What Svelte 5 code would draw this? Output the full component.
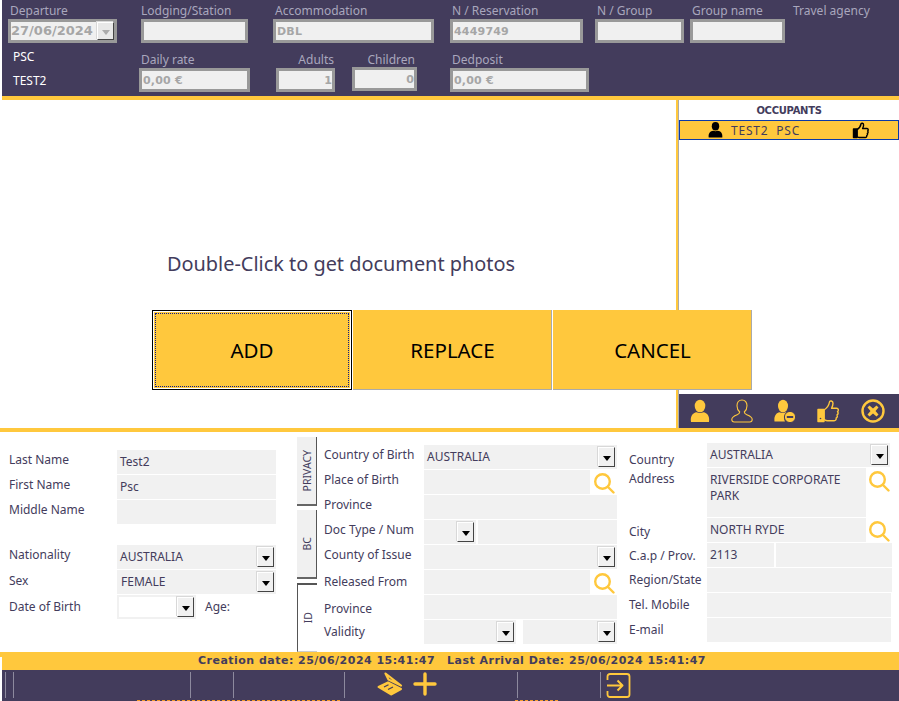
<script lang="ts">
	const occupant = { first: 'TEST2', last: 'PSC' };
</script>

{#snippet arrow(cls = '')}
	<span class="arrow {cls}"><i></i></span>
{/snippet}

{#snippet lens()}
	<svg class="lens" width="22" height="22" viewBox="0 0 22 22" fill="none" stroke="#ffc83d" stroke-width="2.4" stroke-linecap="round">
		<circle cx="9.5" cy="9.5" r="7.3" />
		<path d="M15 15l5.5 5.5" />
	</svg>
{/snippet}

{#snippet thumb(size = 18, fill = 'none', stroke = '#000')}
	<svg width={size} height={size} viewBox="0 0 18 18" {fill} {stroke} stroke-width="1.4" stroke-linejoin="round">
		<path d="M1.5 8h3.5v8.5H1.5z" fill={stroke} />
		<path d="M5 8.5c2 -1 3.500 -3 4 -5.500 .2 -1.300 2.600 -1 2.600 1 0 1.200 -.4 2.300 -1 3.500h4.400c1.500 0 1.600 2 .6 2.500 .8 .7 .6 2 -.3 2.400 .5 .8 .2 1.900 -.6 2.200 .2 1 -.3 1.900 -1.400 1.900H7.500c-1 0 -1.700 -.4 -2.500 -.8z" />
	</svg>
{/snippet}

<div class="page">
	<header class="top">
		<div class="row first">
			<div class="field dep">
				<span class="lab">Departure</span>
				<div class="datebox">27/06/2024<span class="arrow off"><i></i></span></div>
			</div>
			<div class="field lodging"><span class="lab flush">Lodging/Station</span><div class="ro"></div></div>
			<div class="field accom"><span class="lab">Accommodation</span><div class="ro">DBL</div></div>
			<div class="field resv"><span class="lab">N / Reservation</span><div class="ro">4449749</div></div>
			<div class="field group"><span class="lab">N / Group</span><div class="ro"></div></div>
			<div class="field gname"><span class="lab">Group name</span><div class="ro"></div></div>
			<div class="field agency"><span class="lab flush">Travel agency</span></div>
		</div>
		<div class="row second">
			<div class="guest"><span>PSC</span><span>TEST2</span></div>
			<div class="field rate"><span class="lab">Daily rate</span><div class="ro">0,00 €</div></div>
			<div class="field adults"><span class="lab right">Adults</span><div class="ro right">1</div></div>
			<div class="field children"><span class="lab right">Children</span><div class="ro right">0</div></div>
			<div class="field deposit"><span class="lab">Dedposit</span><div class="ro">0,00 €</div></div>
		</div>
	</header>

	<main class="middle">
		<div class="photos">
			<p class="hint">Double-Click to get document photos</p>
		</div>
		<aside class="occupants">
			<h3>OCCUPANTS</h3>
			<div class="occupant">
				<svg width="15" height="16" viewBox="0 0 15 16" fill="#000">
					<ellipse cx="7.500" cy="4.300" rx="3.700" ry="4.200" />
					<path d="M.7 15.500c-.5 -4.500 1.800 -6.500 4.500 -6.700 1.400 .6 3.200 .6 4.600 0 2.700 .2 5 2.200 4.500 6.700z" />
				</svg>
				<span class="who">{occupant.first}&nbsp; {occupant.last}</span>
				{@render thumb(18)}
			</div>
			<div class="tools">
				<svg width="20" height="24" viewBox="0 0 20 24" fill="#ffc83d">
					<ellipse cx="10" cy="7" rx="5.300" ry="6.300" />
					<path d="M1 23c-1 -6 2 -9 5.500 -9.700 2 1 5 1 7 0 3.500 .7 6.500 3.700 5.500 9.700z" />
				</svg>
				<svg width="22" height="24" viewBox="0 0 22 24" fill="none" stroke="#ffc83d" stroke-width="1.100">
					<path d="M11 1c3.200 0 5 2.600 5 5.700 0 2.600 -1.200 5 -2.700 6.300 0 1.500 .7 2 2.500 2.700 3 1.100 5.400 2.200 5.400 4.800 0 1.700 -1 2.500 -2.500 2.500H3.300C1.800 23 .8 22.200 .8 20.500c0 -2.600 2.400 -3.700 5.400 -4.800 1.800 -.7 2.500 -1.200 2.500 -2.700C7.200 11.700 6 9.300 6 6.700 6 3.600 7.800 1 11 1z" />
				</svg>
				<svg width="22" height="24" viewBox="0 0 22 24" fill="#ffc83d">
					<ellipse cx="9" cy="7" rx="5" ry="6.300" />
					<path d="M.5 22.500c-.7 -6 2 -8.700 5 -9.300 1.800 .8 4.500 .8 6.300 0 1 .2 2 .7 2.800 1.300a5.500 5.500 0 0 0 -3.600 8z" />
					<circle cx="16" cy="18" r="5.600" stroke="#433c5c" stroke-width="1" />
					<rect x="12.800" y="17" width="6.400" height="2" fill="#433c5c" />
				</svg>
				<svg width="23" height="24" viewBox="0 0 23 24" fill="none" stroke="#ffc83d" stroke-width="1.400" stroke-linejoin="round">
					<path d="M1 10.500h6v12H1z" fill="#ffc83d" />
					<path d="M7 11c2.500 -1.500 4.800 -4 5.500 -8 .3 -1.700 3.500 -1.400 3.500 1.300 0 1.800 -.6 3.300 -1.400 5h5c2 0 2.300 2.700 .9 3.400 1 .9 .8 2.700 -.5 3.300 .7 1.200 .3 2.600 -.8 3 .2 1.400 -.5 2.700 -2 2.700H10.500c-1.400 0 -2.400 -.6 -3.500 -1.200z" />
					<circle cx="3.500" cy="19.500" r=".8" fill="#433c5c" stroke="none" />
				</svg>
				<svg width="24" height="24" viewBox="0 0 24 24">
					<circle cx="12" cy="12" r="10.500" fill="none" stroke="#ffc83d" stroke-width="2.400" />
					<path d="M8.500 6.500L12 9.500l3.500 -3 2 2L14.500 12l3 3.500 -2 2 -3.500 -3 -3.500 3 -2 -2 3 -3.500 -3 -3.500z" fill="#ffc83d" />
				</svg>
			</div>
		</aside>
		<div class="choices">
			<button class="focused"><span>ADD</span></button>
			<button>REPLACE</button>
			<button>CANCEL</button>
		</div>
	</main>

	<section class="form">
		<div class="col names">
			<span class="l">Last Name</span><div class="v">Test2</div>
			<span class="l">First Name</span><div class="v">Psc</div>
			<span class="l">Middle Name</span><div class="v"></div>
			<span class="spacer"></span>
			<span class="l">Nationality</span><div class="v">AUSTRALIA{@render arrow()}</div>
			<span class="l down1">Sex</span><div class="v ind">FEMALE{@render arrow()}</div>
			<span class="l down2">Date of Birth</span>
			<div class="dob">
				<div class="v short"><span class="blank">{@render arrow()}</span></div>
				<span class="l age">Age:</span>
			</div>
		</div>

		<div class="tabs">
			<button><span>PRIVACY</span></button>
			<button><span>BC</span></button>
			<button class="active"><span>ID</span></button>
		</div>

		<div class="col doc">
			<span class="l">Country of Birth</span><div class="v">AUSTRALIA{@render arrow()}</div>
			<span class="l">Place of Birth</span><div class="pair"><div class="v grow"></div>{@render lens()}</div>
			<span class="l">Province</span><div class="v"></div>
			<span class="l">Doc Type / Num</span><div class="pair tight"><div class="v type">{@render arrow()}</div><div class="v grow"></div></div>
			<span class="l">County of Issue</span><div class="v">{@render arrow()}</div>
			<span class="l down2">Released From</span><div class="pair"><div class="v grow"></div>{@render lens()}</div>
			<span class="l down4">Province</span><div class="v"></div>
			<span class="l down2">Validity</span><div class="pair wide"><div class="v valid">{@render arrow()}</div><div class="v grow">{@render arrow()}</div></div>
		</div>

		<div class="col addr">
			<span class="l down5">Country</span><div class="v edge2">AUSTRALIA{@render arrow()}</div>
			<span class="l top-l">Address</span><div class="pair tall"><div class="v grow multi">RIVERSIDE CORPORATE PARK</div>{@render lens()}</div>
			<span class="l down2">City</span><div class="pair"><div class="v grow">NORTH RYDE</div>{@render lens()}</div>
			<span class="l down1">C.a.p / Prov.</span><div class="pair tight"><div class="v cap">2113</div><div class="v grow"></div></div>
			<span class="l">Region/State</span><div class="v"></div>
			<span class="l">Tel. Mobile</span><div class="v edge1"></div>
			<span class="l">E-mail</span><div class="v edge1"></div>
		</div>
	</section>

	<div class="status">
		<span>Creation date: 25/06/2024 15:41:47</span>
		<span>Last Arrival Date: 25/06/2024 15:41:47</span>
	</div>

	<footer class="bar">
		<span class="sep s1"></span>
		<span class="sep s2"></span>
		<span class="sep s3"></span>
		<span class="sep s4"></span>
		<span class="sep s5"></span>
		<span class="actions">
			<svg width="26" height="24" viewBox="0 0 26 24" fill="none" stroke="#ffc83d" stroke-linejoin="round">
				<path d="M8.500 1.500L24 13.500 11.500 7.500z" stroke-width="2.200" />
				<path d="M1.500 15L11 10.500 24 17 14 22.500z" fill="#ffc83d" stroke-width="2" />
				<path d="M7 15l4.500 -2.200M11 17.500l5 -2.500" stroke="#433c5c" stroke-width="1.200" />
			</svg>
			<svg class="plus" width="24" height="24" viewBox="0 0 24 24" stroke="#ffc83d" stroke-width="3.400" stroke-linecap="round">
				<path d="M12 2v20M2 12h20" />
			</svg>
		</span>
		<span class="sep s6"></span>
		<span class="sep s7"></span>
		<svg class="exit" width="25" height="25" viewBox="0 0 25 25" fill="none" stroke="#ffc83d" stroke-width="1.800" stroke-linejoin="round">
			<path d="M1.500 7V3.500C1.500 2 2.500 1 4 1h17C22.500 1 23.500 2 23.500 3.500v18c0 1.500 -1 2.500 -2.500 2.500H4C2.500 24 1.500 23 1.500 21.500V18" />
			<path d="M1 12.500h15M11.500 7.500l5 5 -5 5" stroke-width="2" />
		</svg>
		<span class="clipped one"></span>
		<span class="clipped two"></span>
	</footer>
</div>

<style>
	:global(body) {
		background: #fff;
		overflow: hidden;
	}

	.page {
		width: 899px;
		height: 701px;
		overflow: hidden;
		font-family: 'Noto Sans', 'DejaVu Sans', sans-serif;
		font-size: 12px;
		color: #433c5c;
	}

	.top {
		margin-left: 2px;
		height: 96px;
		background: #433c5c;
		border-bottom: 4px solid #ffc83d;
		display: flex;
		flex-direction: column;
	}

	.row {
		display: flex;
	}

	.first {
		height: 49px;
		padding: 3px 0 0 6px;
	}

	.second {
		height: 47px;
		padding-top: 3px;
	}

	.field {
		display: flex;
		flex-direction: column;
	}

	.lab {
		color: #a9a7bd;
		line-height: 16px;
		padding-left: 2px;
	}

	.lab.flush {
		padding-left: 0;
	}

	.right {
		text-align: right;
	}

	.ro {
		height: 24px;
		box-sizing: border-box;
		border: 3px solid #999;
		background: #f0f0f0;
		color: #a6a6a6;
		font-family: 'DejaVu Sans', sans-serif;
		font-weight: bold;
		font-size: 11px;
		letter-spacing: .2px;
		line-height: 19px;
		padding-left: 1px;
	}

	.datebox {
		width: 109px;
		height: 24px;
		box-sizing: border-box;
		border: 3px solid #999;
		background: #f0f0f0;
		color: #a6a6a6;
		font-family: 'DejaVu Sans', sans-serif;
		font-weight: bold;
		font-size: 13px;
		line-height: 18px;
		position: relative;
	}

	.datebox .arrow {
		top: 0;
		right: 0;
		height: 18px;
	}

	.dep { width: 133px; }
	.lodging { width: 132px; }
	.accom { width: 177px; }
	.resv { width: 145px; }
	.group { width: 95px; }
	.gname { width: 103px; }
	.lodging .ro { width: 107px; }
	.accom .ro { width: 161px; }
	.resv .ro { width: 133px; }
	.group .ro { width: 89px; }
	.gname .ro { width: 95px; }

	.guest {
		width: 137px;
		padding-left: 11px;
		box-sizing: border-box;
		display: flex;
		flex-direction: column;
		gap: 8px;
		color: #fff;
		line-height: 16px;
		margin-top: -3px;
	}

	.rate { width: 137px; }
	.rate .ro { width: 111px; }
	.adults { width: 76px; }
	.adults .ro { width: 59px; }
	.adults .lab { width: 56px; }
	.children { width: 98px; }
	.children .ro { width: 65px; margin-top: -1px; }
	.children .lab { width: 61px; }
	.deposit .ro { width: 139px; }

	.middle {
		height: 328px;
		position: relative;
		display: flex;
	}

	.photos {
		width: 676px;
		height: 328px;
	}

	.hint {
		margin: 150px 0 0 167px;
		font-size: 19.9px;
		line-height: 28px;
		color: #433c5c;
	}

	.occupants {
		flex: 1;
		border-left: 2px solid #ffc83d;
		box-shadow: inset 1px 0 #aaa;
		display: flex;
		flex-direction: column;
		padding-left: 1px;
	}

	.occupants h3 {
		margin: 2px 0 0;
		text-align: center;
		font-family: 'DejaVu Sans', sans-serif;
		font-size: 10px;
		line-height: 17px;
		font-weight: bold;
		letter-spacing: -.3px;
	}

	.occupant {
		height: 20px;
		margin-top: 1px;
		box-sizing: border-box;
		border: 1px solid #0b3aa8;
		background: #ffc83d;
		display: flex;
		align-items: center;
		padding-left: 28px;
	}

	.who {
		margin-left: 8px;
		width: 121px;
		letter-spacing: .8px;
	}

	.tools {
		margin-top: auto;
		height: 34px;
		background: #433c5c;
		display: flex;
		align-items: center;
		padding-left: 11px;
		gap: 21px;
	}

	.choices {
		position: absolute;
		left: 152px;
		top: 210px;
		display: flex;
		gap: 1px;
	}

	.choices button {
		width: 199px;
		height: 80px;
		box-sizing: border-box;
		background: #ffc83d;
		border: 0;
		box-shadow: inset -1px -1px #aaa;
		font: 20.5px 'Noto Sans', sans-serif;
		color: #000;
		padding: 0;
	}

	.choices .focused {
		width: 200px;
		border: 1px solid #000;
		box-shadow: inset 0 0 0 1px #fff;
		padding: 2px;
		display: flex;
	}

	.focused span {
		flex: 1;
		display: flex;
		align-items: center;
		justify-content: center;
		border: 1px dotted #0b1a8a;
	}

	.form {
		height: 220px;
		border-top: 4px solid #ffc83d;
		border-bottom: 5px solid #ffc83d;
		display: flex;
	}

	.col {
		display: grid;
		grid-auto-rows: 25px;
		align-items: stretch;
	}

	.col .l {
		line-height: 20px;
		white-space: nowrap;
	}

	.down1 { margin-top: 1px; }
	.down2 { margin-top: 2px; }
	.down4 { margin-top: 4px; }
	.down5 { margin-top: 5px; }

	.v {
		height: 24px;
		box-sizing: border-box;
		background: #f1f1f1;
		line-height: 24px;
		padding-left: 3px;
		position: relative;
	}

	.ind {
		padding-left: 4px;
	}

	.names {
		width: 276px;
		box-sizing: border-box;
		padding: 18px 0 0 9px;
		grid-template-columns: 108px 159px;
		grid-template-rows: 25px 25px 25px 20px 25px 25px 25px;
	}

	.spacer {
		grid-column: 1 / -1;
	}

	.dob {
		display: flex;
		height: 24px;
		line-height: 22px;
	}

	.short {
		width: 79px;
		padding: 2px;
		flex-shrink: 0;
	}

	.blank {
		display: block;
		height: 20px;
		background: #fff;
	}

	.col .age {
		margin-left: 9px;
		line-height: 24px;
	}

	.arrow {
		position: absolute;
		right: 2px;
		top: 2px;
		width: 17px;
		height: 20px;
		box-sizing: border-box;
		background: #f0f0f0;
		border: 1px solid;
		border-color: #fff #444 #444 #fff;
		box-shadow: -1px -1px #d8d8d8;
		display: flex;
		align-items: center;
		justify-content: center;
	}

	.arrow i {
		width: 0;
		height: 0;
		border-left: 4px solid transparent;
		border-right: 4px solid transparent;
		border-top: 5px solid #000;
		margin-top: 2px;
	}

	.arrow.off {
		background: #e8e8e8;
	}

	.arrow.off i {
		border-top-color: #aaa;
	}

	.tabs {
		width: 20px;
		margin-left: 21px;
		padding-top: 5px;
		display: flex;
		flex-direction: column;
		gap: 4px;
	}

	.tabs button {
		width: 20px;
		height: 69px;
		padding: 0;
		box-sizing: border-box;
		background: #f0f0f0;
		border: 0;
		border-right: 1px solid #555;
		border-bottom: 2px solid #666;
		color: #433c5c;
		font: 10.5px 'Noto Sans', sans-serif;
		display: flex;
		align-items: center;
		justify-content: center;
	}

	.tabs span {
		writing-mode: vertical-rl;
		transform: rotate(180deg);
	}

	.tabs .active {
		background: #fff;
		border-right: 0;
		border-left: 1px solid #555;
		border-top: 2px solid #555;
		border-bottom: 1px solid #ccc;
	}

	.doc {
		padding: 13px 0 0 7px;
		grid-template-columns: 100px 193px;
	}

	.addr {
		padding: 11px 0 0 12px;
		grid-template-columns: 78px 185px;
	}

	.addr .l {
		line-height: 24px;
	}

	.edge1 { margin-right: 1px; }
	.edge2 { margin-right: 2px; }

	.pair {
		display: flex;
		justify-content: space-between;
		height: 24px;
	}

	.pair .grow {
		flex: 1;
		min-width: 0;
	}

	.lens {
		margin: 2px 2px 0 2px;
		flex-shrink: 0;
	}

	.doc .pair:not(.tight):not(.wide) .grow {
		flex: none;
		width: 166px;
	}

	.tight {
		gap: 2px;
	}

	.type {
		width: 52px;
		flex-shrink: 0;
	}

	.wide {
		gap: 7px;
	}

	.valid {
		width: 92px;
		flex-shrink: 0;
	}

	.tall {
		height: 49px;
		grid-row: span 2;
	}

	.addr .pair:not(.tight) .grow {
		flex: none;
		width: 159px;
	}

	.addr .pair:not(.tight) {
		justify-content: flex-start;
	}

	.multi {
		height: 49px;
		line-height: 16px;
		padding-top: 4px;
	}

	.top-l {
		grid-row: span 2;
		margin-top: -1px;
	}

	.cap {
		width: 67px;
		flex-shrink: 0;
	}

	.status {
		margin: -5px 0 0 2px;
		padding-left: 3px;
		height: 18px;
		background: #ffc83d;
		display: flex;
		justify-content: center;
		gap: 12px;
		font-family: 'DejaVu Sans', sans-serif;
		font-weight: bold;
		font-size: 11px;
		letter-spacing: .48px;
		line-height: 18px;
		position: relative;
	}

	.bar {
		margin-left: 2px;
		height: 31px;
		background: #433c5c;
		display: flex;
		align-items: flex-start;
		padding-top: 2px;
		box-sizing: border-box;
		position: relative;
	}

	.sep {
		width: 1px;
		height: 26px;
		background: #8d8a9e;
	}

	.s1 { margin-left: 3px; }
	.s2 { margin-left: 7px; }
	.s3 { margin-left: 176px; }
	.s4 { margin-left: 42px; }
	.s5 { margin-left: 110px; }
	.s7 { margin-left: 82px; }

	.actions {
		width: 172px;
		box-sizing: border-box;
		padding-left: 32px;
		display: flex;
		align-items: center;
		gap: 10px;
	}

	.exit {
		margin: 1px 0 0 5px;
	}

	.clipped {
		position: absolute;
		bottom: 0;
		border-top: 1px dashed #f59a2a;
	}

	.one {
		left: 135px;
		width: 203px;
	}

	.two {
		left: 513px;
		width: 43px;
	}
</style>
